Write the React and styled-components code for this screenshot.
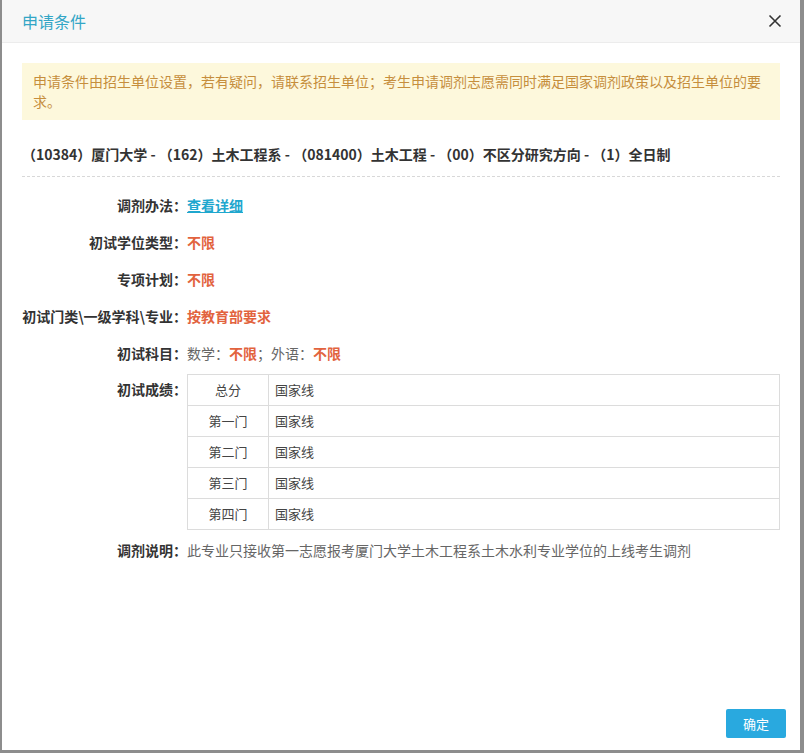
import styled, { createGlobalStyle } from "styled-components";

const GlobalStyle = createGlobalStyle`
  html, body {
    margin: 0;
    padding: 0;
    background: #8d8d8d;
    font-family: "Noto Sans CJK SC", "Noto Sans", sans-serif;
  }
`;

const Modal = styled.div`
  margin: 0 4px 0 2px;
  height: 750px;
  background: #fff;
  display: flex;
  flex-direction: column;
`;

const Header = styled.div`
  height: 42px;
  flex-shrink: 0;
  display: flex;
  align-items: center;
  justify-content: space-between;
  padding: 0 18px 0 20px;
  background: #f7f7f7;
  border-bottom: 1px solid #ececec;
`;

const Title = styled.div`
  color: #33a6c6;
  font-size: 16px;
`;

const Close = styled.button`
  border: 0;
  background: none;
  padding: 0;
  width: 14px;
  height: 14px;
  display: flex;
  cursor: pointer;
`;

const Body = styled.div`
  flex: 1;
  padding: 20px 20px 0 20px;
`;

const Alert = styled.div`
  background: #fdf8dc;
  color: #c68e3c;
  font-size: 14px;
  line-height: 20px;
  padding: 8px 11px 9px 11px;
`;

const Program = styled.div`
  margin-top: 24px;
  padding: 0 0 12px 0;
  font-size: 14px;
  line-height: 20px;
  font-weight: bold;
  color: #333;
  border-bottom: 1px dashed #d8d8d8;
  margin-bottom: 10px;
`;

const Row = styled.div`
  display: grid;
  grid-template-columns: 165px 1fr;
  align-items: start;
  padding: ${(p) => (p.$tight ? "2px 0" : "8px 0")};
  font-size: 14px;
  line-height: ${(p) => (p.$tight ? "31px" : "21px")};
`;

const Label = styled.div`
  text-align: right;
  font-weight: bold;
  color: #333;
  white-space: nowrap;
`;

const Value = styled.div`
  color: #666;
`;

const Hot = styled.span`
  color: #e2633e;
  font-weight: bold;
`;

const Link = styled.a`
  color: #1fa7ce;
  font-weight: bold;
  text-decoration: underline;
`;

const Table = styled.table`
  width: 100%;
  border-collapse: collapse;
  font-size: 13px;
  line-height: 18px;
  color: #444;
`;

const Cell = styled.td`
  border: 1px solid #dcdcdc;
  height: 31px;
  box-sizing: border-box;
  padding: 0 6px;
  text-align: ${(p) => (p.$center ? "center" : "left")};
  width: ${(p) => (p.$center ? "81px" : "auto")};
`;

const Footer = styled.div`
  display: flex;
  justify-content: flex-end;
  padding: 0 14px 12px 0;
`;

const OkButton = styled.button`
  width: 60px;
  height: 29px;
  border: 0;
  border-radius: 2px;
  background: #29a9df;
  color: #fff;
  font-family: inherit;
  font-size: 13px;
  cursor: pointer;
`;

const scores = ["总分", "第一门", "第二门", "第三门", "第四门"];

export default function App() {
  return (
    <>
      <GlobalStyle />
      <Modal>
        <Header>
          <Title>申请条件</Title>
          <Close aria-label="关闭">
            <svg width="14" height="14" viewBox="0 0 14 14">
              <path d="M1.5 1.5 L12.5 12.5 M12.5 1.5 L1.5 12.5" stroke="#333" strokeWidth="1.6" fill="none" />
            </svg>
          </Close>
        </Header>
        <Body>
          <Alert>
            申请条件由招生单位设置，若有疑问，请联系招生单位；考生申请调剂志愿需同时满足国家调剂政策以及招生单位的要求。
          </Alert>
          <Program>
            （10384）厦门大学 - （162）土木工程系 - （081400）土木工程 - （00）不区分研究方向 - （1）全日制
          </Program>
          <Row>
            <Label>调剂办法：</Label>
            <Value>
              <Link href="#">查看详细</Link>
            </Value>
          </Row>
          <Row>
            <Label>初试学位类型：</Label>
            <Value>
              <Hot>不限</Hot>
            </Value>
          </Row>
          <Row>
            <Label>专项计划：</Label>
            <Value>
              <Hot>不限</Hot>
            </Value>
          </Row>
          <Row>
            <Label>初试门类\一级学科\专业：</Label>
            <Value>
              <Hot>按教育部要求</Hot>
            </Value>
          </Row>
          <Row>
            <Label>初试科目：</Label>
            <Value>
              数学：<Hot>不限</Hot>；外语：<Hot>不限</Hot>
            </Value>
          </Row>
          <Row $tight>
            <Label>初试成绩：</Label>
            <Table>
              <tbody>
                {scores.map((s) => (
                  <tr key={s}>
                    <Cell $center>{s}</Cell>
                    <Cell>国家线</Cell>
                  </tr>
                ))}
              </tbody>
            </Table>
          </Row>
          <Row>
            <Label>调剂说明：</Label>
            <Value>此专业只接收第一志愿报考厦门大学土木工程系土木水利专业学位的上线考生调剂</Value>
          </Row>
        </Body>
        <Footer>
          <OkButton>确定</OkButton>
        </Footer>
      </Modal>
    </>
  );
}
